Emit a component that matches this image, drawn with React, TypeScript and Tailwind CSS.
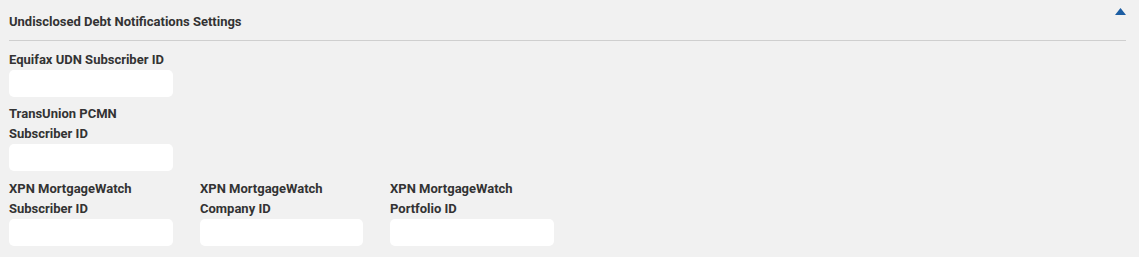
import React from "react";

function Field({
  lines,
  width = "w-[164px]",
}: {
  lines: string[];
  width?: string;
}) {
  return (
    <div className={`flex flex-col ${width}`}>
      <label className="pt-[2px] text-[13px] font-bold leading-[20px] text-[#333333]">
        {lines.map((l, i) => (
          <div key={i}>{l}</div>
        ))}
      </label>
      <input
        aria-label={lines.join(" ")}
        className="h-[27px] w-full rounded-[5px] border-0 bg-white outline-none"
      />
    </div>
  );
}

export default function App() {
  return (
    <div
      className="h-[257px] w-[1139px] bg-[#f1f1f1] pl-[9px] pr-[13px]"
      style={{ fontFamily: "Roboto, 'Liberation Sans', sans-serif" }}
    >
      <div className="flex h-[41px] items-center justify-between border-b border-[#cfcfcf]">
        <h2 className="pt-[4px] text-[13px] font-bold leading-[20px] text-[#333333]">
          Undisclosed Debt Notifications Settings
        </h2>
        <svg
          width="11"
          height="7"
          viewBox="0 0 11 7"
          className="mt-[8px] self-start"
        >
          <path d="M5.5 0 L11 7 L0 7 Z" fill="#1d5ea3" />
        </svg>
      </div>
      <div className="flex flex-col pt-[7px]">
        <Field lines={["Equifax UDN Subscriber ID"]} />
        <div className="mt-[5px]">
          <Field lines={["TransUnion PCMN", "Subscriber ID"]} />
        </div>
        <div className="mt-[6px] flex gap-[27px]">
          <Field lines={["XPN MortgageWatch", "Subscriber ID"]} />
          <Field lines={["XPN MortgageWatch", "Company ID"]} width="w-[163px]" />
          <Field lines={["XPN MortgageWatch", "Portfolio ID"]} />
        </div>
      </div>
    </div>
  );
}
